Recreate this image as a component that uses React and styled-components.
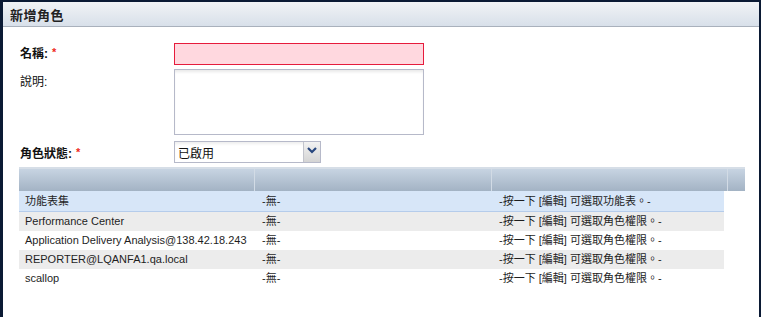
import React from "react";
import styled, { createGlobalStyle } from "styled-components";

const Global = createGlobalStyle`
  html, body { margin: 0; padding: 0; background: #ffffff; }
  body { font-family: "Liberation Sans", "Noto Sans CJK TC", sans-serif; }
  * { box-sizing: border-box; }
`;

const Frame = styled.div`
  width: 761px;
  height: 317px;
  border-left: 3px solid #0b1a34;
  border-top: 2px solid #0b1a34;
  border-right: 2px solid #0b1a34;
  background: #fff;
  display: flex;
  flex-direction: column;
  overflow: hidden;
`;

const TitleBar = styled.div`
  height: 25px;
  flex: none;
  background: linear-gradient(#f1f3f6, #d8e0ea);
  border-bottom: 1px solid #a9b1bc;
  display: flex;
  align-items: center;
  padding-left: 7px;
  font-family: "Noto Sans CJK TC", sans-serif;
  font-weight: bold;
  font-size: 13px;
  letter-spacing: 0.5px;
  color: #222;
`;

const Content = styled.div`
  padding: 16px 0 0 16px;
  display: flex;
  flex-direction: column;
`;

const FormRow = styled.div`
  display: flex;
  align-items: flex-start;
  margin-bottom: ${(p) => p.$gap || 0}px;
`;

const Label = styled.div`
  width: 155px;
  padding-left: 1px;
  padding-top: ${(p) => p.$top || 4}px;
  font-family: "Liberation Sans", "Noto Sans CJK TC", sans-serif;
  font-size: 12px;
  font-weight: ${(p) => (p.$bold ? "bold" : "normal")};
  color: #111;
  line-height: 14px;
`;

const Star = styled.span`
  color: #ee2a1c;
  margin-left: 4px;
  font-size: 11px;
  font-weight: bold;
  vertical-align: top;
  line-height: 10px;
`;

const NameInput = styled.div`
  width: 250px;
  height: 22px;
  border: 1px solid #e61b3c;
  background: #ffd8df;
`;

const DescBox = styled.div`
  width: 250px;
  height: 66px;
  border: 1px solid #b6b9c9;
  background: #fff;
  box-shadow: inset 0 3px 3px -1px rgba(0, 0, 0, 0.09);
`;

const Select = styled.div`
  width: 147px;
  height: 22px;
  border: 1px solid #b6b9c9;
  background: #fff;
  display: flex;
  box-shadow: inset 0 3px 3px -1px rgba(0, 0, 0, 0.07);
`;

const SelectText = styled.div`
  flex: 1;
  padding: 3px 0 0 3px;
  font-family: "Noto Sans CJK TC", sans-serif;
  font-size: 12px;
  line-height: 16px;
  color: #111;
`;

const SelectButton = styled.div`
  width: 17px;
  border-left: 1px solid #c2c4cc;
  background: linear-gradient(#f2f2f2, #d4d4d4);
  display: flex;
  align-items: flex-start;
  justify-content: center;
  padding-top: 5px;
`;

const Table = styled.div`
  margin-top: 4px;
  width: 726px;
  border-top: 2px solid #d6dee7;
`;

const HeadRow = styled.div`
  display: grid;
  grid-template-columns: 236px 237px 236px 17px;
  height: 22px;
  background: linear-gradient(#c7d4e2, #a3b3c4);
`;

const HeadCell = styled.div`
  border-right: 1px solid #d2dbe5;
  &:last-child { border-right: none; }
`;

const Row = styled.div`
  display: grid;
  grid-template-columns: 236px 237px 232px;
  width: 705px;
  height: ${(p) => (p.$selected ? 21 : 19)}px;
  background: ${(p) => (p.$selected ? "#d7e6f8" : p.$alt ? "#ececec" : "#fff")};
  border-bottom: ${(p) => (p.$selected ? "1px solid #b5cceb" : "none")};
  padding-top: ${(p) => (p.$selected ? 1 : 0)}px;
`;

const Cell = styled.div`
  padding-left: ${(p) => p.$pad || 7}px;
  font-family: "Liberation Sans", "Noto Sans CJK TC", sans-serif;
  font-size: 11px;
  line-height: 19px;
  color: #1e1e1e;
  white-space: nowrap;
  overflow: hidden;
`;

const rows = [
  ["功能表集", "-無-", "-按一下 [編輯] 可選取功能表。-"],
  ["Performance Center", "-無-", "-按一下 [編輯] 可選取角色權限。-"],
  ["Application Delivery Analysis@138.42.18.243", "-無-", "-按一下 [編輯] 可選取角色權限。-"],
  ["REPORTER@LQANFA1.qa.local", "-無-", "-按一下 [編輯] 可選取角色權限。-"],
  ["scallop", "-無-", "-按一下 [編輯] 可選取角色權限。-"],
];

export default function App() {
  return (
    <>
      <Global />
      <Frame>
        <TitleBar>新增角色</TitleBar>
        <Content>
          <FormRow $gap={4}>
            <Label $bold $top={4}>
              名稱:<Star>*</Star>
            </Label>
            <NameInput />
          </FormRow>
          <FormRow $gap={6}>
            <Label $top={6}>說明:</Label>
            <DescBox />
          </FormRow>
          <FormRow>
            <Label $bold $top={6}>
              角色狀態:<Star>*</Star>
            </Label>
            <Select>
              <SelectText>已啟用</SelectText>
              <SelectButton>
                <svg width="10" height="7" viewBox="0 0 10 7">
                  <path d="M1 1 L5 5 L9 1" fill="none" stroke="#27467e" strokeWidth="2.2" />
                </svg>
              </SelectButton>
            </Select>
          </FormRow>
          <Table>
            <HeadRow>
              <HeadCell />
              <HeadCell />
              <HeadCell />
              <HeadCell />
            </HeadRow>
            {rows.map((r, i) => (
              <Row key={i} $selected={i === 0} $alt={i % 2 === 1}>
                <Cell $pad={6}>{r[0]}</Cell>
                <Cell>{r[1]}</Cell>
                <Cell>{r[2]}</Cell>
              </Row>
            ))}
          </Table>
        </Content>
      </Frame>
    </>
  );
}
